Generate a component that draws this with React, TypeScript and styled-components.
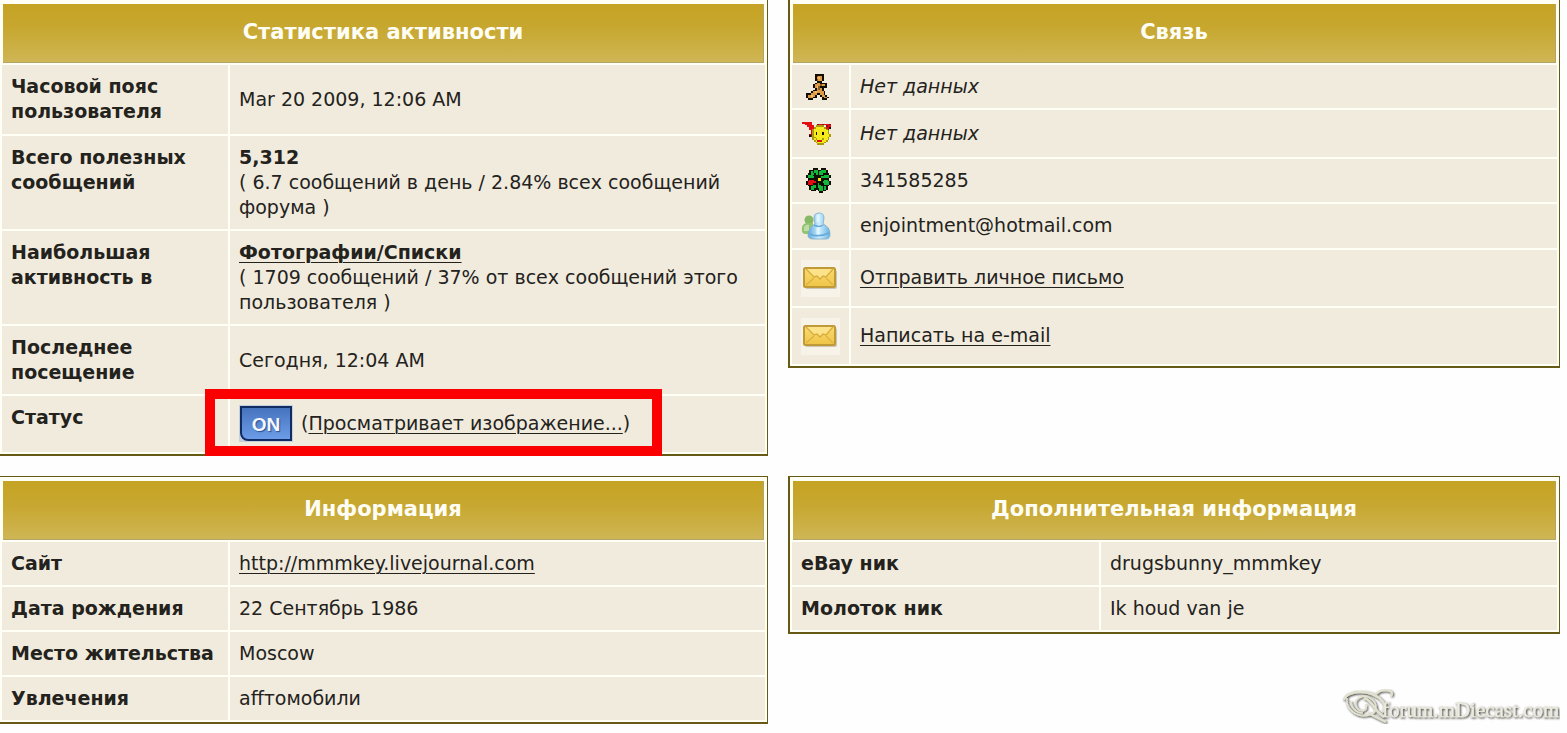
import React from "react";
import styled, { createGlobalStyle } from "styled-components";

const GlobalStyle = createGlobalStyle`
  body {
    margin: 0;
    background: #fefefe;
    color: #24221c;
    font: 19px/25px "DejaVu Sans", Verdana, sans-serif;
  }
`;

const Page = styled.main`
  display: grid;
  grid-template-columns: minmax(0, 768fr) minmax(0, 772fr);
  gap: 20px;
  padding-right: 7px;
`;

const Column = styled.div`
  display: flex;
  flex-direction: column;
  align-items: stretch;
`;

const Panel = styled.section<{ $edge?: boolean; $top?: boolean }>`
  padding: 4px 2px 2px;
  border: solid #665a14;
  border-width: ${(p) => (p.$top ? 0 : 1)}px 1px 2px ${(p) => (p.$edge ? 0 : 2)}px;
  background: #fffff6;
`;

const Title = styled.h2`
  display: flex;
  align-items: center;
  justify-content: center;
  box-sizing: border-box;
  height: 59px;
  margin: 0 1px 2px;
  padding-bottom: 2px;
  border: solid #b5a468;
  border-width: 0 1px 1px 0;
  background: linear-gradient(#c5a323, #c7a72f 40%, #cfb655);
  color: #fffef5;
  font-size: 21px;
  line-height: 25px;
`;

const Table = styled.table`
  width: 100%;
  border-collapse: separate;
  border-spacing: 0;
  table-layout: fixed;
`;

const Row = styled.tr<{ $h: number }>`
  height: ${(p) => p.$h}px;

  &:not(:first-child) > * {
    border-top: 2px solid #fffff6;
  }
`;

const Label = styled.th<{ $w: string }>`
  box-sizing: border-box;
  width: ${(p) => p.$w};
  padding: 9px 9px 8px;
  border-right: 2px solid #fffff6;
  background: #f0ebdd;
  text-align: left;
  vertical-align: top;
`;

const Value = styled.td`
  padding: 8px 9px;
  background: #f0ebdd;
  vertical-align: middle;
`;

const IconCell = styled.th`
  box-sizing: border-box;
  width: 59px;
  padding: 0 9px;
  border-right: 2px solid #fffff6;
  background: #f0ebdd;
  text-align: left;
  vertical-align: middle;

  svg {
    display: block;
  }
`;

const ContactValue = styled(Value)`
  padding: 0 9px 1px;
`;

const Link = styled.a`
  color: inherit;
  text-decoration: underline;
  text-decoration-thickness: 1px;
  text-underline-offset: 3px;
`;

const StatusValue = styled(Value)`
  padding-top: 6px;
  padding-bottom: 8px;
`;

const Status = styled.div`
  display: flex;
  position: relative;
  align-items: center;
  gap: 8px;
  width: fit-content;
`;

const Highlight = styled.span`
  position: absolute;
  inset: -16px -32px -14px -34px;
  border: 10px solid #fb0000;
  pointer-events: none;
`;

const OnBadge = styled.span`
  box-sizing: border-box;
  width: 54px;
  height: 37px;
  border: 1px solid #c5d0df;
  background: #c5d0df;
`;

const OnFace = styled.span`
  display: block;
  box-sizing: border-box;
  height: 35px;
  border: 2px solid #112c63;
  border-radius: 0 0 0 8px;
  background: linear-gradient(#4673bd, #6d9de8);
  color: #f4f8ff;
  font-family: "Liberation Sans", Arial, sans-serif;
  font-size: 19px;
  font-weight: 700;
  line-height: 34px;
  text-align: center;
  text-shadow: 1px 1px 1px #2b4f92;
`;

const LogoBox = styled.footer`
  align-self: flex-end;
  margin-top: auto;

  svg {
    display: block;
  }
`;

const palette: Record<string, string> = {
  k: "#120d04",
  o: "#dd9a42",
  l: "#f3bc6a",
  b: "#8a5a20",
  r: "#e30d12",
  d: "#8c1010",
  y: "#f4ea1c",
  m: "#a99a10",
  g: "#10b93a",
};

const runner = [
  ".....kkkkk...",
  ".....kbook...",
  ".....kolok...",
  ".....kbook...",
  "......kkk....",
  ".....kookkkk.",
  "....kooobook.",
  "....kolbkkkk.",
  ".....kobok...",
  "....kkoook...",
  "...kolooook..",
  "kkkoookkook..",
  "koolok..kook.",
  "koookk...kook",
  ".kkk.....kkk.",
];

const messenger = [
  "rrrrrr...........",
  "..rrrr...drrdrrrd",
  "...rrrr.mmmmm.drr",
  "....rrrmyyyyymrrk",
  "....rrmyyyyyyymd.",
  ".....rmyyyyyyyym.",
  ".....rmykyyykyym.",
  "....ddmykyyykyyym",
  "....kdmyyyyyyyyym",
  "......mmyyyyyyym.",
  "......mymyyymyym.",
  ".......myrrryym..",
  "........myyyym...",
  ".........mmmm....",
];

const flower = [
  "....kkk..kkk...",
  "..kkkggkkgggk..",
  "..kgkggkggggk..",
  ".kkggkgkggkkkk.",
  "kgggkkkkkkkgggk",
  "kggggkkkkgggggk",
  ".kkkkkkyykkkkk.",
  ".krrrkkyykkggk.",
  "krrrrrkkkkggggk",
  "krrrkkkgkkkgggk",
  ".kkkggkggkkkkk.",
  "..kgggkgggkgk..",
  "..kggkkkggkgk..",
  "...kkk.kggkk...",
  "........kk.....",
];

function PixelIcon({ rows, width, height, name }: { rows: string[]; width: number; height: number; name: string }) {
  return (
    <svg
      role="img"
      aria-label={name}
      width={width}
      height={height}
      viewBox={`0 0 ${rows[0].length} ${rows.length}`}
      preserveAspectRatio="none"
      shapeRendering="crispEdges"
    >
      {rows.flatMap((row, y) =>
        row.split("").map((c, x) =>
          c === "." ? null : <rect key={`${x}-${y}`} x={x} y={y} width={1} height={1} fill={palette[c]} />
        )
      )}
    </svg>
  );
}

const PixelSlot = styled.div<{ $indent?: boolean }>`
  padding-left: ${(p) => (p.$indent ? 5 : 1)}px;
`;

function MsnIcon() {
  return (
    <svg role="img" aria-label="MSN" width="30" height="28" viewBox="0 0 30 28">
      <defs>
        <linearGradient id="msn-blue" x1="0" x2="1">
          <stop offset="0" stopColor="#5fa9dc" />
          <stop offset=".5" stopColor="#cfefff" />
          <stop offset="1" stopColor="#67b2e2" />
        </linearGradient>
      </defs>
      <circle cx="8" cy="8" r="4.5" fill="#86b865" />
      <path d="M1 15q1-4 6-4h5v11H4q-4 0-3-7Z" fill="#92c373" />
      <path d="M3 15q2-3 5-2v6H3Z" fill="#bddda5" />
      <path d="M13 6q0-5 5-5t5 5l-1 6q7 3 7 10 0 5-4 5H12q-5 0-5-4 1-8 7-11Z" fill="url(#msn-blue)" stroke="#7cabc9" strokeWidth=".8" />
      <path d="M13 13q5 3 9 0M9 22q8 4 19-1" fill="none" stroke="#65a9d9" strokeWidth="1.5" />
      <path d="M17 3v7M17 15v7" stroke="#ecfbff" strokeWidth="3" opacity=".7" />
    </svg>
  );
}

function Envelope() {
  return (
    <svg role="img" aria-label="Письмо" width="39" height="37" viewBox="0 0 39 37">
      <defs>
        <linearGradient id="envelope" x1="0" y1="0" x2="0" y2="1">
          <stop offset="0" stopColor="#f9dc72" />
          <stop offset="1" stopColor="#efc445" />
        </linearGradient>
      </defs>
      <rect width="39" height="37" fill="#f7f3e9" />
      <rect x="4" y="10" width="32" height="19" rx="2" fill="#b9b2a0" opacity=".7" />
      <rect x="3" y="8" width="31" height="19" rx="1.5" fill="url(#envelope)" stroke="#c09a38" strokeWidth="2" />
      <path d="M5 9l8 8 3-1 3 3 3-3 3 1 7-8" fill="#fce38a" stroke="#d9ad3c" strokeWidth="1.4" />
      <path d="M5 25l8-7M32 25l-7-7" fill="none" stroke="#dcb044" strokeWidth="1.2" />
    </svg>
  );
}

function Logo() {
  return (
    <svg role="img" aria-label="forum.mDiecast.com" width="218" height="35" viewBox="0 0 218 35">
      <defs>
        <filter id="logo-shadow" x="-5%" y="-20%" width="110%" height="150%">
          <feDropShadow dx="1" dy="1" stdDeviation="0.8" floodColor="#2c2c24" floodOpacity="1" />
        </filter>
      </defs>
      <g filter="url(#logo-shadow)" fill="none" stroke="#e2e1d0" strokeWidth="2">
        <path d="M2 11C4 1 30-1 41 13c3 4 2 8-1 10" strokeWidth="2.5" />
        <path d="M34 5C40-1 54 1 49 7" />
        <path d="M5 9c-2 11 10 20 22 17 9-2 9-12 1-17C20 4 10 11 15 19c4 5 11 3 9-4" strokeWidth="1.6" />
        <path d="M9 12c0 7 5 12 12 12" strokeWidth="1.6" />
        <path d="M22 9c7 2 10 9 14 14l6 5M26 24l18 9" strokeWidth="2.5" />
        <text
          x="40"
          y="28"
          fill="#efeee2"
          stroke="#e2e0d2"
          strokeWidth=".3"
          fontFamily="'Liberation Serif', serif"
          fontSize="21"
        >
          forum.mDiecast.com
        </text>
      </g>
    </svg>
  );
}

const leftLabel = "228px";
const extraLabel = "309px";

export default function App() {
  return (
    <>
      <GlobalStyle />
      <Page>
        <Column>
          <Panel $edge $top>
            <Title>Статистика активности</Title>
            <Table>
              <tbody>
                <Row $h={69}>
                  <Label scope="row" $w={leftLabel}>Часовой пояс пользователя</Label>
                  <Value>Mar 20 2009, 12:06 AM</Value>
                </Row>
                <Row $h={95}>
                  <Label scope="row" $w={leftLabel}>Всего полезных сообщений</Label>
                  <Value>
                    <b>5,312</b>
                    <br />( 6.7 сообщений в день / 2.84% всех сообщений форума )
                  </Value>
                </Row>
                <Row $h={95}>
                  <Label scope="row" $w={leftLabel}>Наибольшая активность в</Label>
                  <Value>
                    <Link href="#photos"><b>Фотографии/Списки</b></Link>
                    <br />( 1709 сообщений / 37% от всех сообщений этого пользователя )
                  </Value>
                </Row>
                <Row $h={70}>
                  <Label scope="row" $w={leftLabel}>Последнее посещение</Label>
                  <Value>Сегодня, 12:04 AM</Value>
                </Row>
                <Row $h={58}>
                  <Label scope="row" $w={leftLabel}>Статус</Label>
                  <StatusValue>
                    <Status>
                      <OnBadge><OnFace>ON</OnFace></OnBadge>
                      <span>(<Link href="#image">Просматривает изображение...</Link>)</span>
                      <Highlight />
                    </Status>
                  </StatusValue>
                </Row>
              </tbody>
            </Table>
          </Panel>
        </Column>
        <Column>
          <Panel $top>
            <Title>Связь</Title>
            <Table>
              <tbody>
                <Row $h={43}>
                  <IconCell scope="row"><PixelSlot $indent><PixelIcon name="AIM" rows={runner} width={23} height={26} /></PixelSlot></IconCell>
                  <ContactValue><i>Нет данных</i></ContactValue>
                </Row>
                <Row $h={49}>
                  <IconCell scope="row"><PixelSlot><PixelIcon name="Yahoo" rows={messenger} width={29} height={23} /></PixelSlot></IconCell>
                  <ContactValue><i>Нет данных</i></ContactValue>
                </Row>
                <Row $h={45}>
                  <IconCell scope="row"><PixelSlot $indent><PixelIcon name="ICQ" rows={flower} width={25} height={25} /></PixelSlot></IconCell>
                  <ContactValue>341585285</ContactValue>
                </Row>
                <Row $h={46}>
                  <IconCell scope="row"><MsnIcon /></IconCell>
                  <ContactValue>enjointment@hotmail.com</ContactValue>
                </Row>
                <Row $h={58}>
                  <IconCell scope="row"><Envelope /></IconCell>
                  <ContactValue><Link href="#pm">Отправить личное письмо</Link></ContactValue>
                </Row>
                <Row $h={58}>
                  <IconCell scope="row"><Envelope /></IconCell>
                  <ContactValue><Link href="#email">Написать на e-mail</Link></ContactValue>
                </Row>
              </tbody>
            </Table>
          </Panel>
        </Column>
        <Column>
          <Panel $edge>
            <Title>Информация</Title>
            <Table>
              <tbody>
                <Row $h={43}>
                  <Label scope="row" $w={leftLabel}>Сайт</Label>
                  <Value><Link href="#site">http://mmmkey.livejournal.com</Link></Value>
                </Row>
                <Row $h={45}>
                  <Label scope="row" $w={leftLabel}>Дата рождения</Label>
                  <Value>22 Сентябрь 1986</Value>
                </Row>
                <Row $h={45}>
                  <Label scope="row" $w={leftLabel}>Место жительства</Label>
                  <Value>Moscow</Value>
                </Row>
                <Row $h={45}>
                  <Label scope="row" $w={leftLabel}>Увлечения</Label>
                  <Value>affтомобили</Value>
                </Row>
              </tbody>
            </Table>
          </Panel>
        </Column>
        <Column>
          <Panel>
            <Title>Дополнительная информация</Title>
            <Table>
              <tbody>
                <Row $h={43}>
                  <Label scope="row" $w={extraLabel}>eBay ник</Label>
                  <Value>drugsbunny_mmmkey</Value>
                </Row>
                <Row $h={45}>
                  <Label scope="row" $w={extraLabel}>Молоток ник</Label>
                  <Value>Ik houd van je</Value>
                </Row>
              </tbody>
            </Table>
          </Panel>
          <LogoBox><Logo /></LogoBox>
        </Column>
      </Page>
    </>
  );
}
